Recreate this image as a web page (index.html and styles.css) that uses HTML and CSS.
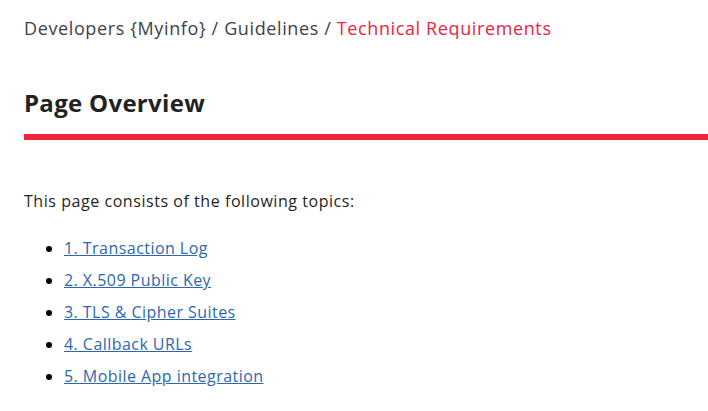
FILE: index.html
```html
<!DOCTYPE html>
<html>
<head>
<meta charset="utf-8">
<link rel="stylesheet" href="styles.css">
</head>
<body>
<div class="page">
  <nav class="crumbs">Developers {Myinfo} / Guidelines / <span class="current">Technical Requirements</span></nav>
  <h1 class="title">Page Overview</h1>
  <div class="rule"></div>
  <p class="intro">This page consists of the following topics:</p>
  <ul class="topics">
    <li><a href="#">1. Transaction Log</a></li>
    <li><a href="#">2. X.509 Public Key</a></li>
    <li><a href="#">3. TLS &amp; Cipher Suites</a></li>
    <li><a href="#">4. Callback URLs</a></li>
    <li><a href="#">5. Mobile App integration</a></li>
  </ul>
</div>
</body>
</html>
```
FILE: styles.css
```css
html, body {
  margin: 0;
  padding: 0;
  background: #ffffff;
}
.page {
  padding: 16px 0 0 24px;
  font-family: "Open Sans", "DejaVu Sans", sans-serif;
}
.crumbs {
  font-size: 18px;
  line-height: 24px;
  color: #3f3f48;
  letter-spacing: 0.62px;
}
.current {
  color: #ef233c;
}
.title {
  margin: 48px 0 0 0;
  font-size: 24px;
  line-height: 30px;
  font-weight: 700;
  color: #222222;
  letter-spacing: 0.3px;
}
.rule {
  margin-top: 16px;
  height: 6px;
  background: #ef233c;
}
.intro {
  margin: 49px 0 0 0;
  font-size: 16px;
  line-height: 24px;
  color: #1f1f1f;
  letter-spacing: 0.55px;
}
.topics {
  margin: 23px 0 0 0;
  padding-left: 40px;
  font-size: 16px;
  line-height: 24px;
}
.topics li {
  margin-bottom: 8px;
}
.topics a {
  color: #2c68b0;
  letter-spacing: 0.45px;
}
```
